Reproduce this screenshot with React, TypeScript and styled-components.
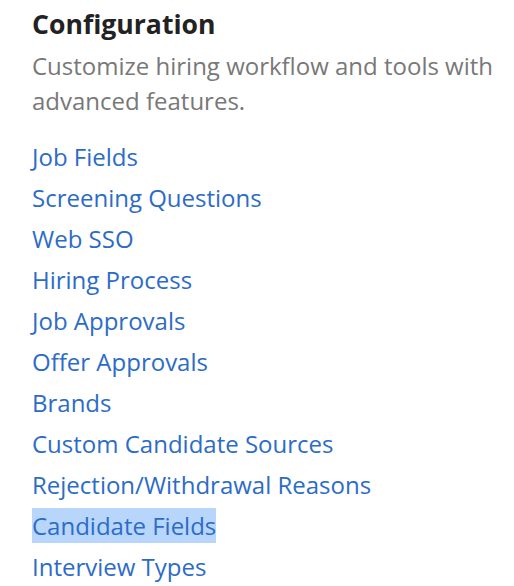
import React from "react";
import styled, { createGlobalStyle } from "styled-components";

const Global = createGlobalStyle`
  html, body { margin: 0; padding: 0; background: #ffffff; }
  body { font-family: "Open Sans", "Noto Sans", sans-serif; }
`;

const Page = styled.div`
  padding: 4px 20px 0 32px;
  display: flex;
  flex-direction: column;
`;

const Title = styled.h1`
  margin: 0;
  font-size: 26.6px;
  font-weight: 700;
  line-height: 40px;
  color: #222222;
`;

const Subtitle = styled.p`
  margin: 4px 0 0 0;
  font-size: 24px;
  line-height: 35px;
  color: #787878;
`;

const LinkList = styled.ul`
  list-style: none;
  margin: 18px 0 0 0;
  padding: 0;
`;

const Item = styled.li`
  font-size: 24px;
  line-height: 41px;
`;

const Link = styled.a<{ $selected?: boolean }>`
  display: inline-block;
  line-height: 35px;
  color: #2c6cc8;
  text-decoration: none;
  background: ${(p) => (p.$selected ? "#b8d6fb" : "transparent")};
`;

const links = [
  "Job Fields",
  "Screening Questions",
  "Web SSO",
  "Hiring Process",
  "Job Approvals",
  "Offer Approvals",
  "Brands",
  "Custom Candidate Sources",
  "Rejection/Withdrawal Reasons",
  "Candidate Fields",
  "Interview Types",
];

export default function App() {
  return (
    <>
      <Global />
      <Page>
        <Title>Configuration</Title>
        <Subtitle>Customize hiring workflow and tools with advanced features.</Subtitle>
        <LinkList>
          {links.map((l) => (
            <Item key={l}>
              <Link href="#" $selected={l === "Candidate Fields"}>{l}</Link>
            </Item>
          ))}
        </LinkList>
      </Page>
    </>
  );
}
